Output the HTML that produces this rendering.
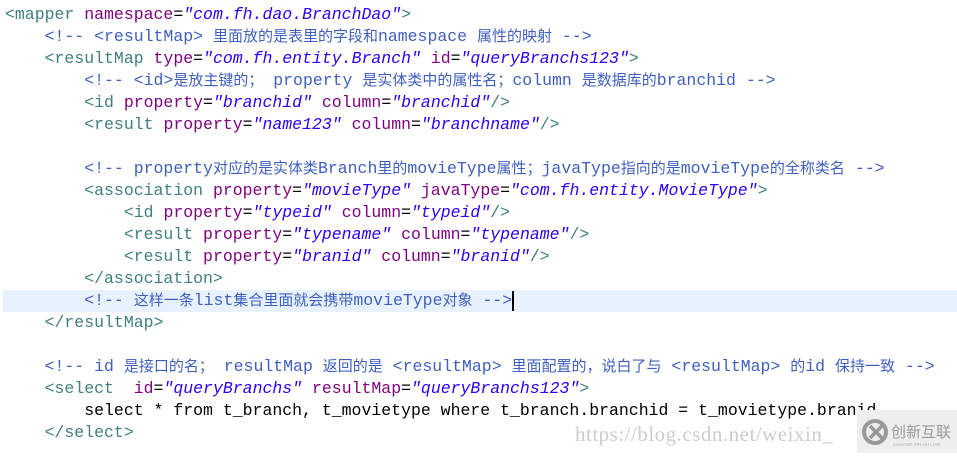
<!DOCTYPE html>
<html><head><meta charset="utf-8"><style>
body{margin:0;width:957px;height:453px;background:#fff;overflow:hidden;position:relative;font-family:"Liberation Mono","Noto Sans CJK SC",monospace;font-size:16.5px}
.l{position:absolute;left:5px;height:22px;line-height:22px;white-space:pre;width:952px}
.t{color:#3f7f7f}.a{color:#7f007f}.v{color:#2a00ff;font-style:italic}.c{color:#3f5fbf}.k{color:#000}
.z{font-family:"Noto Sans CJK SC",sans-serif;font-size:15px;line-height:1}
.hl{position:absolute;left:3px;top:290px;width:954px;height:22px;background:#e8f2fe}
.cur{display:inline-block;width:2px;height:20px;background:#000;vertical-align:middle}
.wm{position:absolute;left:575px;top:422px;font-family:"Liberation Serif",serif;font-size:21px;color:#ccc;letter-spacing:0.5px}
.logo{position:absolute;left:857px;top:410px;width:100px;height:43px;background:#eee}
</style></head><body>
<div class="hl"></div>
<div class="l" style="top:4px"><span class="t">&lt;mapper </span><span class="a">namespace</span>=<span class="v">"com.fh.dao.BranchDao"</span><span class="t">&gt;</span></div>
<div class="l c" style="top:26px">    &lt;!-- &lt;resultMap&gt; <span class="z">里面放的是表里的字段和</span>namespace <span class="z">属性的映射</span> --&gt;</div>
<div class="l" style="top:48px">    <span class="t">&lt;resultMap </span><span class="a">type</span>=<span class="v">"com.fh.entity.Branch"</span> <span class="a">id</span>=<span class="v">"queryBranchs123"</span><span class="t">&gt;</span></div>
<div class="l c" style="top:70px">        &lt;!-- &lt;id&gt;<span class="z">是放主键的；</span> property <span class="z">是实体类中的属性名；</span>column <span class="z">是数据库的</span>branchid --&gt;</div>
<div class="l" style="top:92px">        <span class="t">&lt;id </span><span class="a">property</span>=<span class="v">"branchid"</span> <span class="a">column</span>=<span class="v">"branchid"</span><span class="t">/&gt;</span></div>
<div class="l" style="top:114px">        <span class="t">&lt;result </span><span class="a">property</span>=<span class="v">"name123"</span> <span class="a">column</span>=<span class="v">"branchname"</span><span class="t">/&gt;</span></div>
<div class="l c" style="top:158px">        &lt;!-- property<span class="z">对应的是实体类</span>Branch<span class="z">里的</span>movieType<span class="z">属性；</span>javaType<span class="z">指向的是</span>movieType<span class="z">的全称类名</span> --&gt;</div>
<div class="l" style="top:180px">        <span class="t">&lt;association </span><span class="a">property</span>=<span class="v">"movieType"</span> <span class="a">javaType</span>=<span class="v">"com.fh.entity.MovieType"</span><span class="t">&gt;</span></div>
<div class="l" style="top:202px">            <span class="t">&lt;id </span><span class="a">property</span>=<span class="v">"typeid"</span> <span class="a">column</span>=<span class="v">"typeid"</span><span class="t">/&gt;</span></div>
<div class="l" style="top:224px">            <span class="t">&lt;result </span><span class="a">property</span>=<span class="v">"typename"</span> <span class="a">column</span>=<span class="v">"typename"</span><span class="t">/&gt;</span></div>
<div class="l" style="top:246px">            <span class="t">&lt;result </span><span class="a">property</span>=<span class="v">"branid"</span> <span class="a">column</span>=<span class="v">"branid"</span><span class="t">/&gt;</span></div>
<div class="l t" style="top:268px">        &lt;/association&gt;</div>
<div class="l c" style="top:290px">        &lt;!-- <span class="z">这样一条</span>list<span class="z">集合里面就会携带</span>movieType<span class="z">对象</span> --&gt;<span class="cur"></span></div>
<div class="l t" style="top:312px">    &lt;/resultMap&gt;</div>
<div class="l c" style="top:356px">    &lt;!-- id <span class="z">是接口的名；</span> resultMap <span class="z">返回的是</span> &lt;resultMap&gt; <span class="z">里面配置的，说白了与</span> &lt;resultMap&gt; <span class="z">的</span>id <span class="z">保持一致</span> --&gt;</div>
<div class="l" style="top:378px">    <span class="t">&lt;select  </span><span class="a">id</span>=<span class="v">"queryBranchs"</span> <span class="a">resultMap</span>=<span class="v">"queryBranchs123"</span><span class="t">&gt;</span></div>
<div class="l k" style="top:400px">        select * from t_branch, t_movietype where t_branch.branchid = t_movietype.branid</div>
<div class="l t" style="top:422px">    &lt;/select&gt;</div>
<div class="wm">https://blog.csdn.net/weixin_</div>
<div class="logo"><svg width="100" height="43"><circle cx="18" cy="22" r="11" fill="none" stroke="#999" stroke-width="4"/><path d="M13 16 L25 28 M25 16 L13 28" stroke="#999" stroke-width="3.5"/><text x="34" y="27" font-family="Noto Sans CJK SC,sans-serif" font-size="15" fill="#999">创新互联</text><text x="36" y="36" font-family="Liberation Sans,sans-serif" font-size="4.5" fill="#aaa">CHUANG XIN HU LIAN</text></svg></div>
</body></html>
